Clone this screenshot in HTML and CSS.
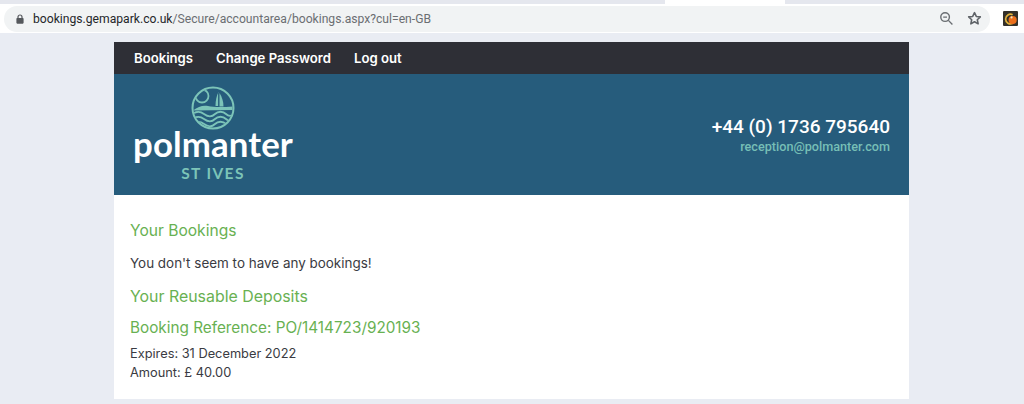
FILE: index.html
```html
<!DOCTYPE html>
<html lang="en-GB">
<head>
<meta charset="utf-8">
<title>Your Bookings</title>
<link rel="stylesheet" href="styles.css">
</head>
<body>
<div class="tabstrip"><div class="tab"></div></div>
<div class="toolbar">
  <div class="omnibox">
    <svg class="lock" width="8" height="10" viewBox="0 0 10 12"><path d="M2.500 5V3.500a2.500 2.500 0 0 1 5 0V5" fill="none" stroke="#55585c" stroke-width="1.500"/><rect x="0.500" y="4.800" width="9" height="7" rx="1" fill="#55585c"/></svg>
    <span class="url"><span class="host">bookings.gemapark.co.uk</span>/Secure/accountarea/bookings.aspx?cul=en-GB</span>
    <svg class="zoom-icon" width="15" height="15" viewBox="0 0 16 16"><circle cx="6.500" cy="6.500" r="4.600" fill="none" stroke="#6a6e72" stroke-width="1.500"/><path d="M4.500 6.500h4M10 10l4.300 4.300" stroke="#6a6e72" stroke-width="1.500" fill="none"/></svg>
    <svg class="star-icon" width="15" height="15" viewBox="0 0 16 16"><path d="M8 1.800l1.900 4 4.300.5-3.200 3 .9 4.400L8 11.500l-3.900 2.200.9-4.400-3.200-3 4.300-.5z" fill="none" stroke="#5f6368" stroke-width="1.700" stroke-linejoin="round"/></svg>
  </div>
  <svg class="ext" width="15" height="15" viewBox="0 0 14 14"><rect width="14" height="14" rx="1" fill="#33302a"/><path d="M9 3.500a4.500 4.500 0 1 0 0 8" fill="none" stroke="#e2b23a" stroke-width="1.600"/><circle cx="9" cy="8.500" r="3.800" fill="#ec6f1c"/><circle cx="8" cy="6" r="1" fill="#f3e6c0"/></svg>
</div>
<main class="page">
  <nav class="nav">
    <a href="#">Bookings</a>
    <a href="#">Change Password</a>
    <a href="#">Log out</a>
  </nav>
  <header class="banner">
    <div class="logo">
      <svg class="mark" width="44" height="44" viewBox="0 0 44 44">
        <defs><clipPath id="disc"><circle cx="22" cy="22" r="19.500"/></clipPath></defs>
        <circle cx="22" cy="22" r="20.500" fill="none" stroke="#7cc4b8" stroke-width="2"/>
        <g clip-path="url(#disc)">
          <circle cx="11" cy="10" r="6.500" fill="none" stroke="#7cc4b8" stroke-width="1.800"/>
          <path d="M27.500 6c-2 4-3 8.500-3 14h2.600V6z" fill="#7cc4b8"/>
          <path d="M28.500 7c2.500 4 4 8.500 4 13.500h-4z" fill="#7cc4b8"/>
          <path d="M2 24.500c5-4 10-5.500 15-4.500 5 1 12 1.500 25 0.500v3.500z" fill="#7cc4b8"/>
          <path d="M1 28c5-3 8-3 12 0s8 3 11 0 8-3 11 0 6 2 9 0M1 33c5-3 8-3 12 0s8 3 11 0 8-3 11 0 6 2 9 0M1 38c5-3 8-3 12 0s8 3 11 0 8-3 11 0 6 2 9 0" fill="none" stroke="#7cc4b8" stroke-width="1.800"/>
        </g>
      </svg>
      <div class="wordmark">polmanter</div>
      <div class="place">ST IVES</div>
    </div>
    <div class="contact">
      <div class="phone">+44 (0) 1736 795640</div>
      <div class="email">reception@polmanter.com</div>
    </div>
  </header>
  <section class="content">
    <h2 class="h-first">Your Bookings</h2>
    <p class="none">You don't seem to have any bookings!</p>
    <h2 class="h-second">Your Reusable Deposits</h2>
    <h2 class="h-third">Booking Reference: PO/1414723/920193</h2>
    <p class="detail">Expires: 31 December 2022<br>Amount: £ 40.00</p>
  </section>
</main>
</body>
</html>
```
FILE: styles.css
```css
* { box-sizing: border-box; }
html, body { margin: 0; height: 404px; overflow: hidden; }
body { background: #e9ecf3; font-family: "Inter", "Open Sans", sans-serif; }

.tabstrip { height: 4px; background: #e5e7ee; padding-left: 665px; }
.tab { width: 120px; height: 4px; background: #fff; }
.toolbar {
  height: 29px; background: #fff; display: flex; align-items: center;
  padding: 0 6px 0 4px; justify-content: space-between;
}
.omnibox {
  width: 986px; height: 26px; border-radius: 13px; background: #f1f3f4;
  display: flex; align-items: center; padding-left: 12px; padding-right: 8px;
}
.lock { flex: none; }
.url { margin-left: 9px; font: 12.150px "Roboto", sans-serif; color: #6b6e72; flex: 1; white-space: nowrap; }
.host { color: #25272a; }
.star-icon { margin-left: 13px; }
.ext { flex: none; }

.page { width: 795px; margin: 9px 0 0 114px; }
.nav {
  height: 32px; background: #2e2f36; display: flex; align-items: center;
  gap: 23px; padding-left: 20px;
}
.nav a { color: #fff; text-decoration: none; font-size: 13.150px; font-weight: 600; }

.banner {
  height: 121px; background: #265c7c; display: flex;
  justify-content: space-between; padding: 12px 19px 0 19px; color: #fff;
}
.logo { width: 160px; display: flex; flex-direction: column; align-items: center; }
.mark { display: block; }
.wordmark { font: 700 34.800px/34px "Lato", sans-serif; color: #fff; margin-top: -3px; letter-spacing: 0.1px; }
.place { font: 700 15.500px/20px "Lato", sans-serif; color: #7cc4b8; letter-spacing: 1.400px; margin-top: 2px; }

.contact { text-align: right; padding-top: 29px; font-family: "Roboto", sans-serif; }
.phone { font-size: 19px; font-weight: 500; line-height: 24px; }
.email { font-size: 12.650px; font-weight: 500; line-height: 15px; color: #76bfb6; }

.content { height: 204px; background: #fff; padding: 26px 16px 0; color: #3a3b42; }
h2 { margin: 0; font-weight: 400; color: #68b152; font-size: 15.600px; line-height: 20px; }
.none { margin: 13px 0 0; font-size: 13.450px; line-height: 18px; }
.h-second { margin-top: 15px; font-size: 15.900px; }
.h-third { margin-top: 10px; font-size: 15.300px; line-height: 22px; }
.detail { margin: 6px 0 0; font-size: 12.800px; line-height: 18.500px; }
```
